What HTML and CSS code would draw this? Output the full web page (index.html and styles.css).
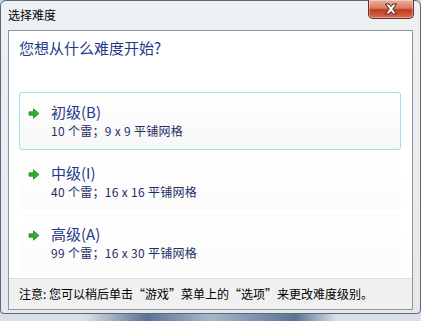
FILE: index.html
```html
<!DOCTYPE html>
<html lang="zh-CN">
  <head>
    <meta charset="UTF-8">
    <title>选择难度</title>
    <link rel="stylesheet" href="styles.css">
  </head>
  <body>
    <div class="window">
      <div class="titlebar">
        <span class="title">选择难度</span>
        <button class="close">
          <svg width="16" height="12" viewBox="0 0 16 12">
            <path d="M2.5 1 L6 1 L8 3.6 L10 1 L13.5 1 L9.8 6 L13.5 11 L10 11 L8 8.4 L6 11 L2.5 11 L6.2 6 Z" fill="#fff" stroke="#4a1f18" stroke-width="1"/>
          </svg>
        </button>
      </div>
      <div class="client">
        <div class="main">
          <h1>您想从什么难度开始?</h1>
          <div class="options">
            <div class="option selected">
              <svg class="arrow" width="12" height="11" viewBox="0 0 12 11">
                <path d="M1 3.8 H5.5 V0.8 L11 5.5 L5.5 10.2 V7.2 H1 Z" fill="#2fae3a" stroke="#1d8a26" stroke-width="0.8"/>
              </svg>
              <div class="text">
                <div class="name">初级(B)</div>
                <div class="desc">10 个雷；9 x 9 平铺网格</div>
              </div>
            </div>
            <div class="option">
              <svg class="arrow" width="12" height="11" viewBox="0 0 12 11">
                <path d="M1 3.8 H5.5 V0.8 L11 5.5 L5.5 10.2 V7.2 H1 Z" fill="#2fae3a" stroke="#1d8a26" stroke-width="0.8"/>
              </svg>
              <div class="text">
                <div class="name">中级(I)</div>
                <div class="desc">40 个雷；16 x 16 平铺网格</div>
              </div>
            </div>
            <div class="option">
              <svg class="arrow" width="12" height="11" viewBox="0 0 12 11">
                <path d="M1 3.8 H5.5 V0.8 L11 5.5 L5.5 10.2 V7.2 H1 Z" fill="#2fae3a" stroke="#1d8a26" stroke-width="0.8"/>
              </svg>
              <div class="text">
                <div class="name">高级(A)</div>
                <div class="desc">99 个雷；16 x 30 平铺网格</div>
              </div>
            </div>
          </div>
        </div>
        <div class="footer">注意: 您可以稍后单击“游戏”菜单上的“选项”来更改难度级别。</div>
      </div>
    </div>
    <div class="below"></div>
  </body>
</html>
```

FILE: styles.css
```css
body {
  margin: 0;
  background: #c9d3de;
  font-family: "Noto Sans CJK SC", "Noto Sans", sans-serif;
  width: 421px;
  height: 321px;
  overflow: hidden;
}

.window {
  height: 314px;
  border: 1px solid #5f6870;
  border-radius: 6px 6px 4px 4px;
  background: linear-gradient(#eef1f4, #e4e8ec);
  display: flex;
  flex-direction: column;
  box-sizing: border-box;
}

.titlebar {
  height: 29px;
  display: flex;
  align-items: flex-start;
  justify-content: space-between;
  padding-left: 7px;
}
.title {
  font-size: 12px;
  color: #000;
  line-height: 14px;
  margin-top: 7px;
}
.close {
  width: 46px;
  height: 19px;
  margin: -1px 6px 0 0;
  border: 1px solid #6b2e25;
  border-top: none;
  border-radius: 0 0 5px 5px;
  background: linear-gradient(#eab0a2 0%, #d97a62 45%, #c23a20 55%, #d66c50 100%);
  box-shadow: inset 0 0 0 1px rgba(255,255,255,0.35);
  display: flex;
  align-items: center;
  justify-content: center;
  padding: 0;
}

.client {
  flex: 1;
  margin: 0 7px 3px 7px;
  border: 1px solid #8e969e;
  background: #fff;
  display: flex;
  flex-direction: column;
}
.main {
  flex: 1;
  padding: 0 10px;
}
h1 {
  font-size: 15px;
  font-weight: normal;
  color: #1e3a8a;
  margin: 7px 0 0 0;
  line-height: 20px;
}
.options {
  margin-top: 34px;
  display: flex;
  flex-direction: column;
  gap: 3px;
  padding-right: 1px;
}
.option {
  height: 58px;
  display: flex;
  align-items: flex-start;
  border: 1px solid transparent;
  border-radius: 3px;
  background: linear-gradient(#ffffff, #fbfbfb);
  box-sizing: border-box;
}
.option.selected {
  border-color: #a6dde9;
  background: linear-gradient(#ffffff, #f7f7f7);
}
.arrow {
  margin: 15px 0 0 8px;
  flex: none;
}
.text {
  margin-left: 11px;
  margin-top: 9px;
}
.name {
  font-size: 15px;
  line-height: 20px;
  color: #1e3a8a;
}
.desc {
  font-size: 12px;
  line-height: 17px;
  letter-spacing: 0.3px;
  color: #1c2f66;
}

.footer {
  height: 30px;
  border-top: 1px solid #dfdfdf;
  background: #f0f0f0;
  font-size: 12px;
  line-height: 30px;
  padding-left: 10px;
  color: #000;
}

.below {
  height: 7px;
  background: linear-gradient(90deg, #d9dfe6 20%, #5a7394 35%, #a8b8cc 50%, #5a7394 70%, #d9dfe6 80%);
}
```
